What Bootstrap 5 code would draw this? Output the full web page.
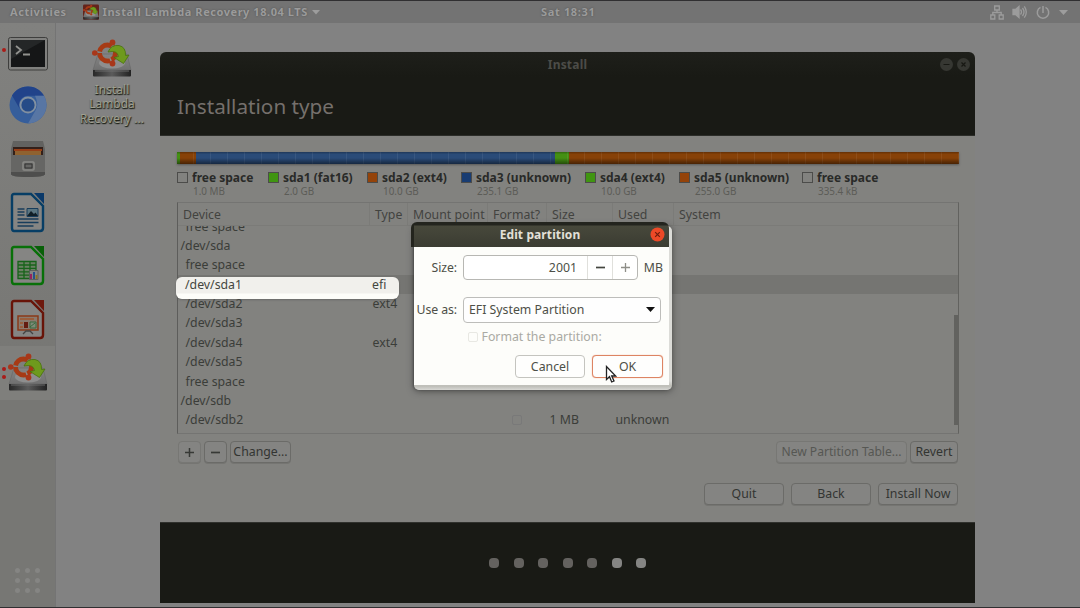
<!DOCTYPE html>
<html lang="en">
<head>
<meta charset="utf-8">
<meta name="viewport" content="width=device-width, initial-scale=1">
<title>Install</title>
<link href="https://cdn.jsdelivr.net/npm/bootstrap@5.3.0/dist/css/bootstrap.min.css" rel="stylesheet">
<style>
body{width:1080px;height:608px;overflow:hidden;background:#828282;font-family:"Noto Sans","Open Sans",sans-serif;font-size:12.3px;line-height:16px;color:#3b3d39;border-top:1px solid #302f31;border-bottom:1px solid #302f31}
svg{display:block;flex:none}
.topbar{height:22px;background:#737373;color:#9b9b9b;font-weight:700;font-size:11px;letter-spacing:.55px;text-shadow:0 0 2px #505050;padding:0 12px 0 10px}
.topbar .apps-side{width:531px}
.topbar .clock{letter-spacing:.65px}
.dock{width:56px;padding-top:2px;background:linear-gradient(#81817f,#777774 60%,#777774);border-right:1px solid #747474;position:relative}
.dock-item{height:53.5px;position:relative}
.dock-item.running{background:#7f7f7c}
.pip{position:absolute;width:4px;height:4px;border-radius:50%;background:#a91c18;left:2px}
.apps{display:grid;grid-template-columns:repeat(3,5px);gap:5px;position:absolute;left:15px;bottom:14px}
.apps i{width:5px;height:5px;border-radius:50%;background:#858583}
.desk{width:104px;padding-top:16px}
.desk-label{font-size:11.8px;line-height:14.4px;color:#a0a08f;text-shadow:1px 1px 1px #1b1f17,0 1px 1px #30332b;width:80px;margin:3px 0 0 8px;letter-spacing:.1px}
.win{width:815px;height:551px;margin-top:29px;background:#82827f;border-radius:6px 6px 0 0;overflow:hidden}
.win-head{height:84px;background:linear-gradient(#1e1f1a,#191a15 30%);position:relative;border-bottom:1px solid #2c2d29}
.win-name{height:26px;font-weight:700;font-size:12px;color:#4c4c48;letter-spacing:.2px;padding-top:5px}
.win-head h1{font-size:20.7px;font-weight:400;line-height:30px;color:#75706c;margin:13px 0 0 17px}
.win-ctl{position:absolute;right:5px;top:6px;gap:4px}
.content{height:386px;padding:16px 17px 0 17px}
.disk{height:12px;width:782px;position:relative;box-shadow:0 1px 2px #3338}
.disk i{height:12px;display:block}
.disk:after{content:"";position:absolute;inset:0;background:linear-gradient(#0004,#0000 20%,#0000 50%,#0007),repeating-linear-gradient(90deg,#0000 0 16px,#ffffff12 16px 17px)}
.c-green{background:#449013}.c-orange{background:#874107}.c-blue{background:#2a4b78}
.legend{display:grid;grid-template-columns:91px 99px 94px 124px 94px 123px 1fr;padding-top:6px;height:38px}
.legend b{display:block;font-size:12px;line-height:16px;color:#292a28;white-space:nowrap}
.legend span{display:block;font-size:9.9px;line-height:10px;color:#5c5c57;padding-left:1px}
.sw{width:11px;height:11px;border:1px solid #4c4c4a;margin:2px 4px 0 0;flex:none}
.sw.c-green{background:#409511}.sw.c-orange{background:#94430a}.sw.c-blue{background:#183c72}
.parts{width:782px;height:232px;border:1px solid #747472;border-left-color:#5d5d5b;border-right-color:#62625f;overflow:hidden;position:relative}
.prow{display:grid;grid-template-columns:192px 38px 80px 59px 66px 61px 1fr;height:19.4px;line-height:20.4px;white-space:nowrap}
.prow.heads{height:23px;line-height:23px;color:#42433f;border-bottom:1px solid #7b7b78}
.heads span{padding-left:5px;border-right:1px solid #7b7b78}
.heads span:last-child{border:0}
.pbody{height:207px;overflow:hidden}
.pbody .prow:first-child{margin-top:-9.5px}
.prow .dv{padding-left:7.500px}.prow .dv.root{padding-left:2.500px}
.prow .ty{padding-left:2.500px}
.prow.picked{background:#757572}
.glow{position:absolute;left:176px;top:277px;width:223px;height:22px;border-radius:6px;background:linear-gradient(#f1f0ec 0 16px,#fdfdf9 17px);box-shadow:0 1px 2px #5558;color:#444640;line-height:16px}
.glow span:first-child{margin-left:9px;width:187px}
.bar-thumb{position:absolute;right:0;top:112px;width:4px;height:110px;background:#62625f}
.cb{width:10px;height:10px;border:1px solid #797979;border-radius:2px;margin:5px 0 0 24px}
.ubtn{border:1px solid #6b6b68;border-radius:4px;height:22px;padding:0;line-height:20px;font-size:12.3px;text-align:center;color:#333532;background:#848482;white-space:nowrap;box-shadow:0 1px 0 #757572}
.ubtn.off{color:#565753;border-color:#777774}
.w23{width:23px}.w62{width:61px}.w80{width:80px}.w48{width:48px}.w131{width:131px;font-size:12.1px}
.tools{gap:3px;margin-top:7px;padding-left:1px}
.steps{gap:7px;margin-top:20px}
.win-foot{height:81px;background:#191a15;border-top:1px solid #30312d;gap:14.5px}
.win-foot i{width:10px;height:10px;border-radius:4px;background:#64625f}
.win-foot i.on{background:#858583}
.rim{position:absolute;left:413.5px;top:226px;width:258px;height:164px;border-radius:5px;background:linear-gradient(#dcdcd8 0 155px,#bdbdb7 160px,#d8d8d4);box-shadow:0 1px 7px #2229,-1px 0 2px #0004}
.rim span{position:absolute;left:136px;top:147px;color:#555650}
.dlg{position:absolute;left:411px;top:222px;width:258px;height:163px;color:#4d4f47;border-radius:6px 6px 0 0;overflow:hidden}
.dlg-head{height:25px;background:linear-gradient(#23241e 0 3px,#47483b 4px,#3b3c32);color:#e3e0d8;font-weight:700;font-size:12px;letter-spacing:.1px;position:relative;border-left:3px solid #23241d;padding-right:3px}
.dlg-head svg{position:absolute;right:4.500px;top:5px}
.dlg-body{height:138px;background:#fdfdfa;margin-left:2.5px;padding-top:8px}
.dlg-row{height:25px}
.dlg-row label{width:43.5px;text-align:right;margin-right:6px;white-space:nowrap;letter-spacing:-.1px}
.spin{width:175px;height:25px;border:1px solid #b7b7b3;border-radius:4px;background:#fff}
.spin span{text-align:center;border-left:1px solid #e0e0dc;width:25px;height:23px;display:flex;align-items:center;justify-content:center}
.spin span:first-child{flex:1;border:0;justify-content:flex-end;padding-right:10px}
.unit{margin-right:6px}
.dlg-row.use{margin-top:17px}
.pick{width:198px;height:26px;border:1px solid #bdbdba;border-radius:4px;padding:0 5px;background:#fefefe}
.fmt{color:#aaaaa3;padding:7px 0 0 54px}
.fmt i{width:10px;height:10px;border:1px solid #e8e8e3;border-radius:2px;margin-right:4px}
.acts{gap:7px;margin:10px 6px 0 0}
.dlg .ubtn{background:#fefefd;border-color:#c4c4bf;width:70px;height:23px;color:#4d4f47;box-shadow:none;line-height:22px}
.dlg .ubtn.main{border:1px solid #dd8463;width:71px;box-shadow:0 0 1px #e8906e}
.cursor{position:absolute;left:605px;top:365px}
</style>
</head>
<body class="d-flex flex-column">
<svg width="0" height="0" class="position-absolute">
  <defs>
    <linearGradient id="metal" x1="0" y1="0" x2="0" y2="1"><stop offset="0" stop-color="#858585"/><stop offset="1" stop-color="#707070"/></linearGradient>
    <linearGradient id="front" x1="0" y1="0" x2="1" y2="0"><stop offset="0" stop-color="#282828"/><stop offset=".5" stop-color="#5b5b5b"/><stop offset="1" stop-color="#222"/></linearGradient>
    <symbol id="installer" viewBox="0 0 40 40">
      <path d="M6 15h29l4 16H1z" fill="url(#metal)" stroke="#666" stroke-width=".6"/>
      <ellipse cx="20" cy="24" rx="13" ry="5.500" fill="#8e8e8e"/>
      <path d="M1 31h38v5.500q0 1-1 1H2q-1 0-1-1z" fill="url(#front)"/>
      <path d="M3 32h34" stroke="#777" stroke-width=".8"/>
      <circle cx="15.500" cy="14" r="8" fill="none" stroke="#a63a15" stroke-width="4.800" stroke-dasharray="15.300 1.450" stroke-dashoffset="7"/>
      <g fill="#a8371a"><circle cx="2.800" cy="14" r="2.800"/><circle cx="20.500" cy="3.500" r="2.900"/><circle cx="20.500" cy="24.500" r="2.900"/></g>
      <path d="M16 13q3-7.500 11-6.500 7 1.500 6.500 10l3.500-.5-5.500 8.500-9.500-6 4.500-1q-1-6.500-10.500-4.500z" fill="#6e9a1d" stroke="#47720d" stroke-width=".8"/>
    </symbol>
  </defs>
</svg>

<header class="topbar d-flex align-items-center">
  <div class="apps-side d-flex align-items-center"><span>Activities</span>
    <svg class="ms-3" width="16" height="17" viewBox="0 0 40 40"><rect width="40" height="38" rx="3" fill="#64231b"/><use href="#installer" width="40" height="40"/></svg>
    <span class="ms-1 text-nowrap">Install Lambda Recovery 18.04 LTS</span>
    <svg class="ms-1" width="8" height="5" viewBox="0 0 8 5"><path d="M0 0h8L4 4.500z" fill="#9d9d9d"/></svg>
  </div>
  <span class="clock">Sat 18:31</span>
  <div class="d-flex align-items-center ms-auto">
    <svg width="14" height="15" viewBox="0 0 14 15" fill="none" stroke="#9c9c9c" stroke-width="1.300"><path d="M4.700 1h4.600v4H4.700zM.8 10h4v4h-4zM9.200 10h4v4h-4zM7 5v2.500M2.800 10V7.500h8.400V10"/></svg>
    <svg class="ms-2" width="15" height="14" viewBox="0 0 15 14" fill="none" stroke="#9c9c9c" stroke-width="1.300"><path d="M1 4.500h2.500L7 1.500v11L3.500 9.500H1z" fill="#9c9c9c"/><path d="M8.500 4.500q2 2.500 0 5M10.500 3q3 4 0 8M12.300 1.300q4 5.700 0 11.400"/></svg>
    <svg class="ms-2" width="16" height="15" viewBox="0 0 15 15" fill="none" stroke="#9c9c9c" stroke-width="1.500"><path d="M5 2.400a5.700 5.700 0 1 0 5 0M7.500 1v7"/></svg>
    <svg class="ms-2" width="9" height="5" viewBox="0 0 9 5"><path d="M0 0h9L4.500 5z" fill="#9d9d9d"/></svg>
  </div>
</header>

<div class="d-flex flex-grow-1">
  <nav class="dock d-flex flex-column">
    <div class="dock-item d-flex align-items-center justify-content-center"><i class="pip" style="top:23px"></i>
      <svg class="mt-1" width="40" height="34" viewBox="0 0 40 34"><rect x=".5" y=".5" width="39" height="32.500" rx="2" fill="#80807e" stroke="#3e3e3d"/><path d="M3 3h34v27H3z" fill="#151617"/><path d="M3 3h34L3 22z" fill="#242627"/><path d="M8 9l5 4-5 4M15 17.500h7" fill="none" stroke="#91918e" stroke-width="1.800"/></svg></div>
    <div class="dock-item d-flex align-items-center justify-content-center">
      <svg width="38" height="38" viewBox="0 0 38 38"><circle cx="19" cy="19" r="18.500" fill="#365e9b"/><path d="M3 9.500A18.500 18.500 0 0 1 35 9.800H19a9.200 9.200 0 0 0-8 13.500z" fill="#21438a"/><path d="M35 9.800A18.500 18.500 0 0 1 19 37.500L27 23.600q3-5.500-1-13.800z" fill="#5876a4"/><circle cx="19" cy="19" r="8.500" fill="#8290a0"/><circle cx="19" cy="19" r="6.600" fill="#264b87"/></svg></div>
    <div class="dock-item d-flex align-items-center justify-content-center">
      <svg width="36" height="38" viewBox="0 0 36 38"><path d="M3 1h30l2 8v25q0 3-17 3T1 34V9z" fill="#626260"/><path d="M3 7h30v11H3z" fill="#33201a"/><path d="M4 9h28v2H4z" fill="#963f18"/><path d="M5 11h26v4H5z" fill="#8f6230"/><path d="M1 15h34v19q0 3-17 3T1 34z" fill="#666664"/><path d="M1 32h34v2q0 3-17 3T1 34z" fill="#4e4e4d"/><rect x="13" y="22" width="11" height="8" rx="1" fill="none" stroke="#8a8a87" stroke-width="1.500"/><path d="M15 24h7v4h-7z" fill="none" stroke="#333"/></svg></div>
    <div class="dock-item d-flex align-items-center justify-content-center">
      <svg width="36" height="41" viewBox="0 0 36 41"><path d="M4 2h17l12 12v22q0 3-3 3H4q-2 0-2-3V4q0-2 2-2z" fill="#858583" stroke="#073e65" stroke-width="2.400"/><path d="M24 1h10v11z" fill="#0a3969"/><path d="M7.500 17h7M7.500 20h7M7.500 23h7M7.500 27h21M7.500 30.500h21M7.500 34h16" stroke="#183d5b" stroke-width="1.600"/><path d="M17 16.500h11v8H17z" fill="#5a7580" stroke="#183d5b"/><path d="M17 24l4-5 3 3 1.500-1.500L28 24z" fill="#111f27"/></svg></div>
    <div class="dock-item d-flex align-items-center justify-content-center">
      <svg width="36" height="41" viewBox="0 0 36 41"><path d="M4 2h17l12 12v22q0 3-3 3H4q-2 0-2-3V4q0-2 2-2z" fill="#858583" stroke="#087008" stroke-width="2.400"/><path d="M24 1h10v11z" fill="#086008"/><path d="M8 16.500h18v17H8zM8 20h18M8 23.400h18M8 26.800h18M8 30.200h18M14 16.500v17M20 16.500v17" fill="#6c8064" stroke="#17631a" stroke-width="1.300"/><path d="M19.500 25.500h8.500v9h-8.500z" fill="#858583" stroke="#555" stroke-width=".7"/><path d="M21 29v5" stroke="#96245c" stroke-width="2"/><path d="M24 27v7" stroke="#24528c" stroke-width="2"/><path d="M26.500 30v4" stroke="#8c7620" stroke-width="1.800"/></svg></div>
    <div class="dock-item d-flex align-items-center justify-content-center">
      <svg width="36" height="41" viewBox="0 0 36 41"><path d="M4 2h17l12 12v22q0 3-3 3H4q-2 0-2-3V4q0-2 2-2z" fill="#858583" stroke="#681408" stroke-width="2.400"/><path d="M24 1h10v11z" fill="#6e190d"/><path d="M8 17h20v14H8z" fill="#8a7a6e" stroke="#8a3a18" stroke-width="1.500"/><path d="M10 20h14M10 24h3M10 28h3" stroke="#a0552c" stroke-width="1.500"/><path d="M14 23h4v6h-4z" fill="#641c10"/><path d="M20 23h6v6h-6z" fill="#7f8a78" stroke="#376a3e"/><path d="M20 28l5-4" stroke="#376a3e"/><path d="M13 35l3-3h4l3 3" fill="none" stroke="#444" stroke-width="1.300"/></svg></div>
    <div class="dock-item running d-flex align-items-center justify-content-center"><i class="pip" style="top:21px"></i><i class="pip" style="top:29px"></i>
      <svg width="40" height="40"><use href="#installer" width="40" height="40"/></svg></div>
    <div class="apps"><i></i><i></i><i></i><i></i><i></i><i></i><i></i><i></i><i></i></div>
  </nav>

  <div class="desk d-flex flex-column align-items-center text-center">
    <svg class="ms-2" width="41" height="40"><use href="#installer" width="40" height="40"/></svg>
    <div class="desk-label">Install<br>Lambda<br>Recovery ...</div>
  </div>

  <main class="win d-flex flex-column">
    <div class="win-head">
      <div class="win-name text-center">Install</div>
      <div class="win-ctl d-flex">
        <svg width="13" height="13" viewBox="0 0 13 13"><circle cx="6.500" cy="6.500" r="6.500" fill="#363732"/><path d="M3.500 6.500h6" stroke="#171813" stroke-width="1.200"/></svg>
        <svg width="13" height="13" viewBox="0 0 13 13"><circle cx="6.500" cy="6.500" r="6.500" fill="#363732"/><path d="M4.500 4.500l4 4m0-4l-4 4" stroke="#171813" stroke-width="1.200"/></svg>
      </div>
      <h1>Installation type</h1>
    </div>
    <section class="content">
      <div class="disk d-flex"><i class="c-green" style="width:2.500px"></i><i class="c-orange" style="width:16.500px"></i><i class="c-blue" style="width:358.500px"></i><i class="c-green" style="width:14.500px"></i><i class="c-orange flex-grow-1"></i></div>
      <div class="legend">
        <div class="d-flex"><i class="sw"></i><div><b>free space</b><span>1.0 MB</span></div></div>
        <div class="d-flex"><i class="sw c-green"></i><div><b>sda1 (fat16)</b><span>2.0 GB</span></div></div>
        <div class="d-flex"><i class="sw c-orange"></i><div><b>sda2 (ext4)</b><span>10.0 GB</span></div></div>
        <div class="d-flex"><i class="sw c-blue"></i><div><b>sda3 (unknown)</b><span>235.1 GB</span></div></div>
        <div class="d-flex"><i class="sw c-green"></i><div><b>sda4 (ext4)</b><span>10.0 GB</span></div></div>
        <div class="d-flex"><i class="sw c-orange"></i><div><b>sda5 (unknown)</b><span>255.0 GB</span></div></div>
        <div class="d-flex"><i class="sw"></i><div><b>free space</b><span>335.4 kB</span></div></div>
      </div>
      <div class="parts">
        <div class="prow heads"><span>Device</span><span>Type</span><span>Mount point</span><span>Format?</span><span>Size</span><span>Used</span><span>System</span></div>
        <div class="pbody">
          <div class="prow"><span class="dv">free space</span></div>
          <div class="prow"><span class="dv root">/dev/sda</span></div>
          <div class="prow"><span class="dv">free space</span></div>
          <div class="prow picked"></div>
          <div class="prow"><span class="dv">/dev/sda2</span><span class="ty">ext4</span></div>
          <div class="prow"><span class="dv">/dev/sda3</span></div>
          <div class="prow"><span class="dv">/dev/sda4</span><span class="ty">ext4</span></div>
          <div class="prow"><span class="dv">/dev/sda5</span></div>
          <div class="prow"><span class="dv">free space</span></div>
          <div class="prow"><span class="dv root">/dev/sdb</span></div>
          <div class="prow"><span class="dv">/dev/sdb2</span><span></span><span></span><span><i class="cb d-block"></i></span><span class="ty">1 MB</span><span class="ty">unknown</span></div>
        </div>
        <div class="bar-thumb"></div>
      </div>
      <div class="tools d-flex">
        <button class="ubtn off w23"><svg class="mx-auto" width="9" height="9" viewBox="0 0 9 9"><path d="M0 4.500h9M4.500 0v9" stroke="#373936" stroke-width="1.500"/></svg></button>
        <button class="ubtn w23"><svg class="mx-auto" width="9" height="9" viewBox="0 0 9 9"><path d="M0 4.500h9" stroke="#373936" stroke-width="1.700"/></svg></button>
        <button class="ubtn w62">Change...</button>
        <button class="ubtn off w131 ms-auto">New Partition Table...</button>
        <button class="ubtn w48">Revert</button>
      </div>
      <div class="steps d-flex justify-content-end">
        <button class="ubtn w80">Quit</button><button class="ubtn w80">Back</button><button class="ubtn w80">Install Now</button>
      </div>
    </section>
    <footer class="win-foot d-flex justify-content-center align-items-center"><i></i><i></i><i></i><i></i><i></i><i class="on"></i><i class="on"></i></footer>
  </main>
</div>

<div class="glow d-flex"><span>/dev/sda1</span><span>efi</span></div>

<div class="rim"><span>0 MB</span></div>
<div class="dlg">
  <div class="dlg-head d-flex align-items-center justify-content-center">Edit partition
    <svg width="15" height="15" viewBox="0 0 15 15"><circle cx="7.500" cy="7.500" r="7" fill="#ed4927"/><path d="M5.200 5.200l4.600 4.600m0-4.600L5.200 9.800" stroke="#6e1c0c" stroke-width="1.200"/></svg>
  </div>
  <div class="dlg-body">
    <div class="dlg-row d-flex align-items-center"><label>Size:</label>
      <div class="spin d-flex"><span>2001</span><span><svg width="9" height="9" viewBox="0 0 9 9"><path d="M0 4.500h9" stroke="#44463f" stroke-width="1.700"/></svg></span><span><svg width="9" height="9" viewBox="0 0 9 9"><path d="M0 4.500h9M4.500 0v9" stroke="#8e8e88" stroke-width="1.300"/></svg></span></div>
      <span class="unit ms-auto">MB</span></div>
    <div class="dlg-row use d-flex align-items-center"><label>Use as:</label>
      <div class="pick d-flex align-items-center justify-content-between"><span>EFI System Partition</span><svg width="9" height="5" viewBox="0 0 9 5"><path d="M0 0h9L4.500 5z" fill="#111"/></svg></div></div>
    <div class="fmt d-flex align-items-center"><i></i>Format the partition:</div>
    <div class="acts d-flex justify-content-end"><button class="ubtn">Cancel</button><button class="ubtn main">OK</button></div>
  </div>
</div>
<svg class="cursor" width="12" height="19" viewBox="0 0 12 19"><path d="M1.500 1.500v13l3-2.800 2.200 5.300 2.300-1-2.300-5h4z" fill="#fff" stroke="#222" stroke-width="1.300"/></svg>
<script src="https://cdn.jsdelivr.net/npm/bootstrap@5.3.0/dist/js/bootstrap.bundle.min.js"></script>
</body>
</html>
